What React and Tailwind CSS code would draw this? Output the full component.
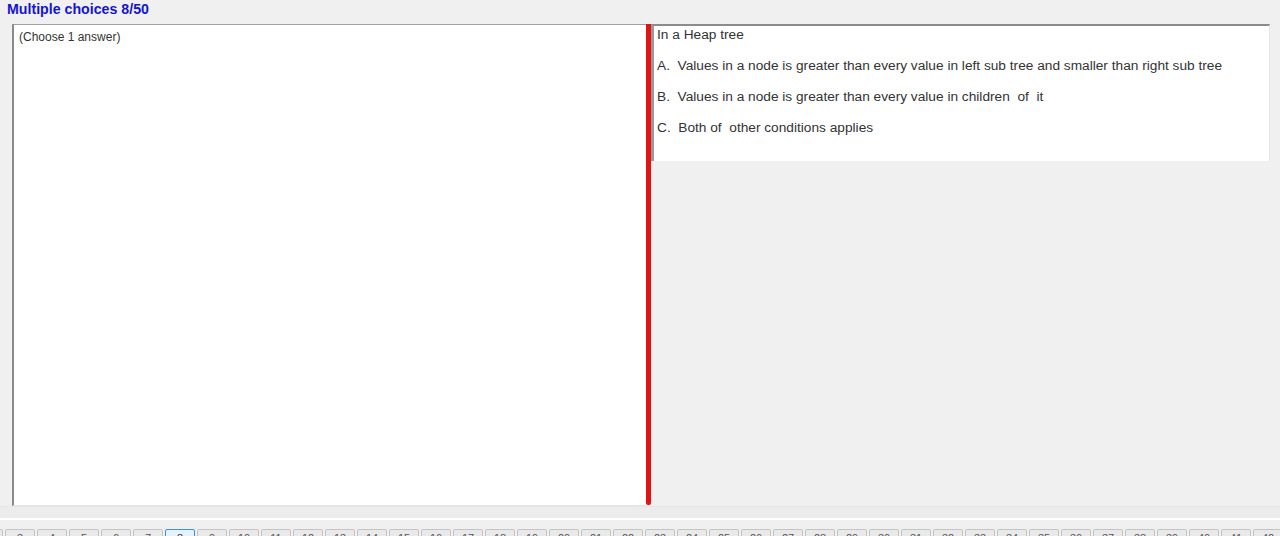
import React from 'react';

const options = [
  'A.  Values in a node is greater than every value in left sub tree and smaller than right sub tree',
  'B.  Values in a node is greater than every value in children  of  it',
  'C.  Both of  other conditions applies',
];

const App = () => {
  const pages = Array.from({ length: 41 }, (_, i) => i + 2);
  const current = 8;

  return (
    <div className="w-[1280px] h-[536px] overflow-hidden bg-[#f0f0f0] font-['Liberation_Sans',Arial,sans-serif] text-[#333]">
      {/* Title */}
      <div className="h-[24px] pl-[7px] pt-[1px] text-[14.2px] leading-[16px] font-bold text-[#1414d2]">
        Multiple choices 8/50
      </div>

      {/* Panels */}
      <div className="flex h-[482px] pl-[12px]">
        <div className="w-[634px] bg-white border-l-2 border-t border-b border-l-[#8a8a8a] border-t-[#a0a0a0] border-b-[#e4e4e4]">
          <p className="pl-[5px] pt-[5px] text-[12px] leading-[14px] text-[#333]">(Choose 1 answer)</p>
        </div>

        <div className="w-[5px] h-[481px] bg-[#e11414] rounded-b-[2px]" />

        <div className="flex-1 pr-[10px]">
          <div className="h-[137px] bg-white border-t-2 border-l-[3px] border-r border-t-[#8c8c8c] border-l-[#9a9a9a] border-r-[#e6e6e6]">
            <div className="pl-[3px] pt-[1px] text-[13.7px] leading-[16px]">
              <p>In a Heap tree</p>
              {options.map((o) => (
                <p key={o} className="mt-[15px] whitespace-pre">{o}</p>
              ))}
            </div>
          </div>
        </div>
      </div>

      {/* Separator strip */}
      <div className="h-[12px] border-t border-[#e6e6e6] bg-[#ececec]" />
      <div className="h-[2px] bg-white" />
      <div className="h-[9px]" />

      {/* Question buttons */}
      <div className="flex gap-[2px] -ml-[27px]">
        {pages.map((n) => (
          <div
            key={n}
            className={
              n === current
                ? 'shrink-0 w-[30px] h-[22px] rounded-[2px] border border-[#3c8fd8] bg-[#e5f1fb] pt-[1px] text-center text-[11px] leading-[14px] text-[#333]'
                : 'shrink-0 w-[30px] h-[22px] rounded-[2px] border border-[#c4c4c4] bg-[#e9e9e9] pt-[1px] text-center text-[11px] leading-[14px] text-[#555]'
            }
          >
            {n}
          </div>
        ))}
      </div>
    </div>
  );
};

export default App;
